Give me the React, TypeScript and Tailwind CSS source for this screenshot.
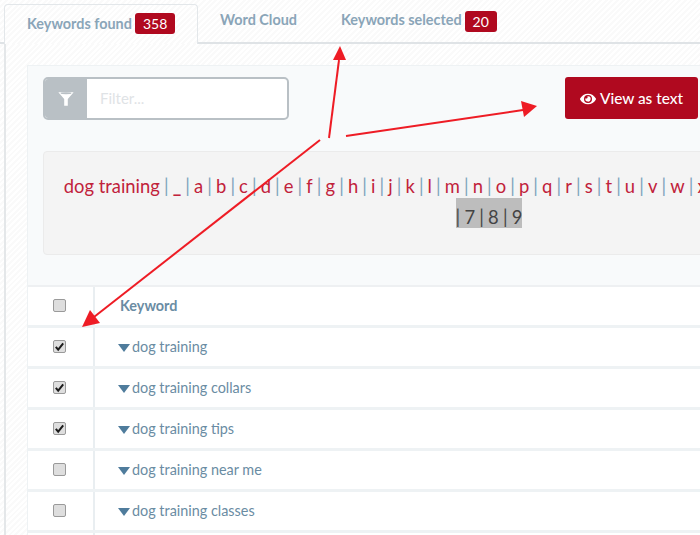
import React from "react";
import { FaEye } from "react-icons/fa";

const letters = "_ a b c d e f g h i j k l m n o p q r s t u v w x y z 0 1 2 3 4 5 6".split(" ");
const rows: [string, boolean][] = [
  ["dog training", true],
  ["dog training collars", true],
  ["dog training tips", true],
  ["dog training near me", false],
  ["dog training classes", false],
  ["dog training school", false],
];

function Box({ checked }: { checked: boolean }) {
  return (
    <span className="relative inline-flex w-[13px] h-[13px]">
      <input
        type="checkbox"
        readOnly
        checked={checked}
        className="appearance-none w-[13px] h-[13px] rounded-[2px] border border-[#9a9a9a] bg-[#dedede] m-0"
      />
      {checked && (
        <svg viewBox="0 0 13 13" className="absolute inset-0 w-[13px] h-[13px] pointer-events-none">
          <path d="M2.8 6.8 L5.2 9.6 L10.2 3.4" fill="none" stroke="#1c1c1c" strokeWidth="2" />
        </svg>
      )}
    </span>
  );
}

function Sep() {
  return <span className="text-[#7ba3bc] px-[4.1px]">|</span>;
}

function Badge({ children }: { children: React.ReactNode }) {
  return (
    <span className="inline-flex items-center justify-center h-[21px] px-[8px] ml-[3px] rounded-[3px] bg-[#b0091f] text-white text-[14px] font-normal">
      {children}
    </span>
  );
}

export default function App() {
  return (
    <div className="relative w-[700px] h-[535px] overflow-hidden bg-white font-['Lato',sans-serif] bg-[repeating-linear-gradient(135deg,#fafafa_0,#fafafa_2px,#ffffff_2px,#ffffff_4px)]">
      {/* tabs */}
      <div className="flex items-stretch h-[44px] pl-[4px] pt-[4px] border-b-2 border-[#dfe3e6] w-[700px]">
        <div className="flex items-center w-[194px] h-[40px] pl-[22px] pb-[2px] -mb-[2px] border border-b-0 border-[#e3e7ea] rounded-t-[4px] text-[14.4px] font-bold text-[#8aa5b8] bg-[repeating-linear-gradient(135deg,#fafafa_0,#fafafa_2px,#ffffff_2px,#ffffff_4px)]">
          Keywords found<Badge>358</Badge>
        </div>
        <div className="flex items-start pt-[7px] ml-[22px] text-[14.4px] leading-[18px] font-bold text-[#8aa5b8]">Word Cloud</div>
        <div className="flex items-start pt-[7px] ml-[44px] text-[14.4px] leading-[18px] font-bold text-[#8aa5b8]">
          <span>Keywords selected</span>
          <Badge>20</Badge>
        </div>
      </div>

      {/* body */}
      <div className="ml-[4px] pl-[21px] pt-[21px] border-l-2 border-[#e4e7e9] w-[1100px]">
        <div className="w-[1000px] bg-[#f8fafb] border-t border-l border-[#eef2f4]">
          <div className="px-[15px] pt-[11px] w-[671px] flex justify-between items-start">
            <div className="flex w-[246px] h-[43px] rounded-[5px] border-2 border-[#b9c0c5] overflow-hidden bg-white">
              <div className="w-[42px] bg-[#b9c0c5] flex items-center justify-center">
                <svg viewBox="0 0 20 20" className="w-[18px] h-[18px]">
                  <path d="M1.5 2.5 H18.5 L12 10 V17.5 H8 V10 Z" fill="#ffffff" />
                  <ellipse cx="10" cy="3.6" rx="6" ry="1" fill="#b9c0c5" />
                </svg>
              </div>
              <div className="flex-1 flex items-center pl-[13px] text-[15px] text-[#dfe3e6]">Filter...</div>
            </div>
            <div className="flex items-center justify-center gap-[4px] w-[133px] h-[42px] pt-[1px] rounded-[3px] bg-[#b0091f] text-white text-[15.4px] font-medium -mr-[14px] shrink-0">
              <FaEye size={16} />
              <span>View as text</span>
            </div>
          </div>

          <div className="ml-[15px] mt-[31px] w-[892px] h-[104px] rounded-[4px] border border-[#ebebeb] bg-[#f4f4f4] pt-[19px] text-center text-[18.4px] leading-[31px] text-[#c1223b] whitespace-nowrap">
            <div>
              <span>dog training</span>
              {letters.map((l) => (
                <React.Fragment key={l}>
                  <Sep />
                  <span className={l === "_" ? "font-bold" : ""}>{l}</span>
                </React.Fragment>
              ))}
            </div>
            <div className="flex justify-center -mt-[4px]">
              <span className="block bg-[#bdbdbd] text-[#444] h-[30px] leading-[39px]">
                |<span className="px-[4.2px]">7</span>|<span className="px-[4.2px]">8</span>|<span className="pl-[4.2px]">9</span>
              </span>
            </div>
          </div>

          <div className="h-[32px] border-b-2 border-[#eef0f2]" />

          <div className="bg-white text-[14.4px]">
            <div className="flex h-[41px] border-b-[3px] border-[#eef2f4]">
              <div className="w-[67px] pr-[3px] pb-[2px] border-r-2 border-[#e9eef1] flex items-center justify-center">
                <Box checked={false} />
              </div>
              <div className="flex items-center pl-[25px] font-bold text-[#6a8ca3]">Keyword</div>
            </div>
            {rows.map(([name, c]) => (
              <div key={name} className="flex h-[41px] border-b-[3px] border-[#eef2f4]">
                <div className="w-[67px] pr-[3px] pb-[2px] border-r-2 border-[#e9eef1] flex items-center justify-center">
                  <Box checked={c} />
                </div>
                <div className="flex items-center pl-[23px] text-[#6a8ca3]">
                  <svg viewBox="0 0 12 8" className="w-[12px] h-[8px] mr-[2px] mt-[2px]">
                    <path d="M0 0 H12 L6 8 Z" fill="#4f7c9c" />
                  </svg>
                  {name}
                </div>
              </div>
            ))}
          </div>
        </div>
      </div>

      {/* annotation arrows */}
      <svg viewBox="0 0 700 535" className="absolute inset-0 w-[700px] h-[535px] pointer-events-none">
        <g stroke="#ee1c25" strokeWidth="2" fill="none">
          <path d="M329 138 L339 60" />
          <path d="M346 136 L523 110" />
          <path d="M320 140 L94 317" />
        </g>
        <g fill="#ee1c25">
          <path d="M340 46 L333 60 L346 60 Z" />
          <path d="M537 106 L521 101 L524 117 Z" />
          <path d="M82 327 L90 310 L100 323 Z" />
        </g>
      </svg>
    </div>
  );
}
